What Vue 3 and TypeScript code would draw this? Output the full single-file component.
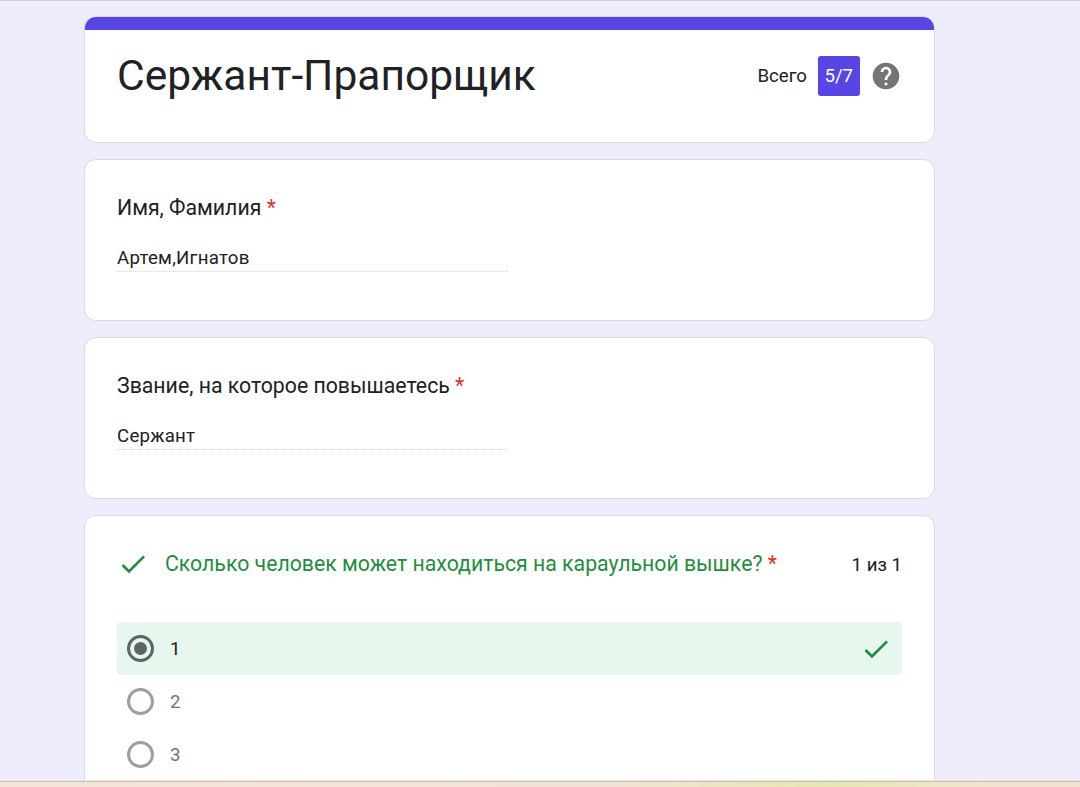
<script setup lang="ts">
const options = ["1", "2", "3"];
const fields = [
  { label: "Имя, Фамилия", value: "Артем,Игнатов" },
  { label: "Звание, на которое повышаетесь", value: "Сержант" },
];
</script>

<template>
  <div class="page">
    <div class="scroll">
      <div class="column">
        <section class="card header-card">
          <div class="accent"></div>
          <div class="header-body">
            <h1 class="title">Сержант-Прапорщик</h1>
            <div class="score">
              <span class="score-label">Всего</span>
              <span class="score-badge">5/7</span>
              <svg class="help" viewBox="0 0 24 24" width="32" height="32" aria-hidden="true">
                <path
                  fill="#757575"
                  d="M12 2C6.48 2 2 6.48 2 12s4.48 10 10 10 10-4.48 10-10S17.52 2 12 2zm1 17h-2v-2h2v2zm2.07-7.75l-.9.92C13.45 12.9 13 13.5 13 15h-2v-.5c0-1.1.45-2.1 1.17-2.83l1.24-1.26c.37-.36.59-.86.59-1.41 0-1.1-.9-2-2-2s-2 .9-2 2H8c0-2.21 1.79-4 4-4s4 1.79 4 4c0 .88-.36 1.68-.93 2.25z"
                />
              </svg>
            </div>
          </div>
        </section>

        <section v-for="field in fields" :key="field.label" class="card field-card">
          <div class="question">{{ field.label }} <span class="req">*</span></div>
          <div class="answer">{{ field.value }}</div>
        </section>

        <section class="card quiz-card">
          <div class="quiz-head">
            <svg class="check head-check" viewBox="0 0 24 24" width="32" height="32" aria-hidden="true">
              <path fill="#1e8e3e" d="M9 16.17L4.83 12l-1.42 1.41L9 19 21 7l-1.41-1.41z" />
            </svg>
            <div class="quiz-title">Сколько человек может находиться на караульной вышке? <span class="req">*</span></div>
            <div class="points">1 из 1</div>
          </div>
          <div class="options">
            <div
              v-for="(opt, i) in options"
              :key="opt"
              class="option"
              :class="{ selected: i === 0 }"
            >
              <span class="radio"></span>
              <span class="opt-text">{{ opt }}</span>
              <svg v-if="i === 0" class="check" viewBox="0 0 24 24" width="32" height="32" aria-hidden="true">
                <path fill="#1e8e3e" d="M9 16.17L4.83 12l-1.42 1.41L9 19 21 7l-1.41-1.41z" />
              </svg>
            </div>
          </div>
        </section>
      </div>
    </div>
    <div class="taskbar"></div>
  </div>
</template>

<style>
html,
body {
  margin: 0;
  overflow: hidden;
}
</style>

<style scoped>
.page {
  width: 1080px;
  height: 787px;
  display: flex;
  flex-direction: column;
  overflow: hidden;
  background: #eeedfb;
  font-family: Roboto, "Liberation Sans", sans-serif;
  color: #202124;
}

.scroll {
  flex: 1;
  min-height: 0;
  overflow: hidden;
  border-top: 1px solid #cfcfcf;
  box-sizing: border-box;
}

.column {
  width: 851px;
  margin-left: 84px;
  padding-top: 15px;
  display: flex;
  flex-direction: column;
  gap: 16px;
}

.card {
  box-sizing: border-box;
  background: #fff;
  border: 1px solid #dadce0;
  border-radius: 12px;
}

.header-card {
  height: 127px;
  overflow: hidden;
}

.accent {
  height: 14px;
  margin: -1px -1px 0;
  background: #5845e6;
}

.header-body {
  display: flex;
  justify-content: space-between;
  padding: 22px 32px 0;
}

.title {
  margin: 0;
  font-size: 42.5px;
  font-weight: 400;
  line-height: 48px;
}

.score {
  display: flex;
  align-items: center;
  height: 40px;
  margin-top: 4px;
  font-size: 18.67px;
}

.score-label {
  margin-right: 11px;
}

.score-badge {
  width: 41.5px;
  height: 40px;
  display: flex;
  align-items: center;
  justify-content: center;
  border-radius: 3px;
  background: #5845e6;
  color: #fff;
  margin-right: 10.5px;
}

.field-card {
  height: 162px;
  padding: 36px 32px 0;
}

.question {
  font-size: 21.27px;
  line-height: 24px;
}

.req {
  color: #d93025;
}

.answer {
  width: 391px;
  margin-top: 26px;
  padding-bottom: 1px;
  font-size: 18.67px;
  letter-spacing: 0.25px;
  line-height: 24px;
  border-bottom: 1px dotted #d4d4d4;
}

.quiz-card {
  height: 320px;
  padding: 32px 32px 0;
}

.quiz-head {
  display: flex;
  align-items: flex-start;
}

.head-check {
  flex: none;
  margin-right: 16px;
}

.quiz-title {
  flex: 1;
  margin-top: 1px;
  font-size: 21.27px;
  line-height: 30px;
  color: #1e8e3e;
}

.points {
  font-size: 18.67px;
  line-height: 30px;
  margin-top: 2px;
}

.options {
  margin-top: 42px;
}

.option {
  height: 53px;
  display: flex;
  align-items: center;
  padding: 0 10px;
  border-radius: 4px;
  font-size: 18.67px;
  color: #70757a;
}

.option.selected {
  background: #e6f7ed;
  color: #202124;
}

.radio {
  box-sizing: border-box;
  width: 27px;
  height: 27px;
  border: 3px solid #9aa0a6;
  border-radius: 50%;
  margin-right: 16px;
  display: flex;
  align-items: center;
  justify-content: center;
}

.selected .radio {
  border-color: #5f6368;
}

.selected .radio::after {
  content: "";
  width: 13px;
  height: 13px;
  border-radius: 50%;
  background: #5f6368;
}

.opt-text {
  flex: 1;
}

.taskbar {
  flex: none;
  height: 6px;
  box-sizing: border-box;
  border-top: 1px solid #c9c3bb;
  box-shadow: 0 -1px 0 #e4e4e4;
  background: linear-gradient(90deg, #f5e3d8 0%, #f3e2d6 55%, #e6e6b0 77%, #f3e3d0 92%);
}
</style>
